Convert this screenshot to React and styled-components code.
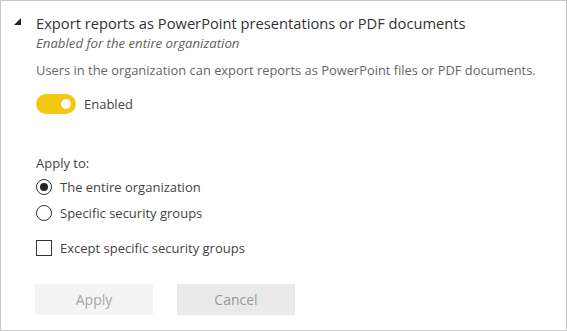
import styled, { createGlobalStyle } from 'styled-components'

const GlobalStyle = createGlobalStyle`
  html, body {
    margin: 0;
    padding: 0;
    background: #ffffff;
  }
  * {
    box-sizing: border-box;
  }
`

const Panel = styled.div`
  width: 567px;
  height: 331px;
  border: 1px solid #c8c8c8;
  background: #ffffff;
  font-family: 'Open Sans', 'Noto Sans', sans-serif;
  color: #252423;
  padding: 11px 0 0 13px;
  display: flex;
  align-items: flex-start;
  gap: 15px;
`

const Caret = styled.div`
  width: 0;
  height: 0;
  margin-top: 6px;
  border-left: 7px solid transparent;
  border-bottom: 7px solid #252423;
`

const Body = styled.div`
  display: flex;
  flex-direction: column;
  flex: 1;
`

const Title = styled.div`
  font-size: 14.7px;
  line-height: 22px;
  color: #333333;
`

const Subtitle = styled.div`
  font-size: 13.2px;
  line-height: 18px;
  font-style: italic;
  color: #605e5c;
`

const Description = styled.div`
  margin-top: 9px;
  font-size: 12.9px;
  line-height: 18px;
  color: #666666;
`

const ToggleRow = styled.label`
  margin-top: 15px;
  display: flex;
  align-items: center;
  gap: 8px;
  font-size: 13px;
  color: #444444;
`

const Track = styled.span`
  width: 40px;
  height: 20px;
  border-radius: 10px;
  background: #f2c811;
  display: flex;
  align-items: center;
  justify-content: ${(p) => (p.$on ? 'flex-end' : 'flex-start')};
  padding: 0 5px;
`

const Knob = styled.span`
  width: 10px;
  height: 10px;
  border-radius: 50%;
  background: #ffffff;
`

const GroupLabel = styled.div`
  margin-top: 40px;
  font-size: 13px;
  line-height: 18px;
  color: #444444;
`

const Options = styled.div`
  margin-top: 6px;
  display: flex;
  flex-direction: column;
  gap: 8px;
`

const Option = styled.label`
  display: flex;
  align-items: center;
  gap: 8px;
  height: 18px;
  font-size: 13px;
  color: #444444;
`

const Radio = styled.span`
  width: 16px;
  height: 16px;
  border-radius: 50%;
  border: 1px solid #333333;
  display: flex;
  align-items: center;
  justify-content: center;
  &::after {
    content: '';
    width: 8px;
    height: 8px;
    border-radius: 50%;
    background: ${(p) => (p.$checked ? '#252423' : 'transparent')};
  }
`

const Checkbox = styled.span`
  width: 16px;
  height: 16px;
  border: 1px solid #333333;
`

const CheckRow = styled(Option)`
  margin-top: 17px;
`

const Actions = styled.div`
  margin-top: 27px;
  display: flex;
  gap: 24px;
  margin-left: -1px;
`

const Button = styled.button`
  width: 118px;
  height: 31px;
  border: none;
  font-family: inherit;
  font-size: 14px;
  background: ${(p) => (p.$secondary ? '#eaeaea' : '#f4f4f4')};
  color: ${(p) => (p.$secondary ? '#999999' : '#a6a6a6')};
`

export default function App() {
  return (
    <>
      <GlobalStyle />
      <Panel>
        <Caret />
        <Body>
          <Title>Export reports as PowerPoint presentations or PDF documents</Title>
          <Subtitle>Enabled for the entire organization</Subtitle>
          <Description>
            Users in the organization can export reports as PowerPoint files or PDF documents.
          </Description>
          <ToggleRow>
            <Track $on>
              <Knob />
            </Track>
            Enabled
          </ToggleRow>
          <GroupLabel>Apply to:</GroupLabel>
          <Options>
            <Option>
              <Radio $checked />
              The entire organization
            </Option>
            <Option>
              <Radio />
              Specific security groups
            </Option>
          </Options>
          <CheckRow>
            <Checkbox />
            Except specific security groups
          </CheckRow>
          <Actions>
            <Button disabled>Apply</Button>
            <Button $secondary disabled>Cancel</Button>
          </Actions>
        </Body>
      </Panel>
    </>
  )
}
